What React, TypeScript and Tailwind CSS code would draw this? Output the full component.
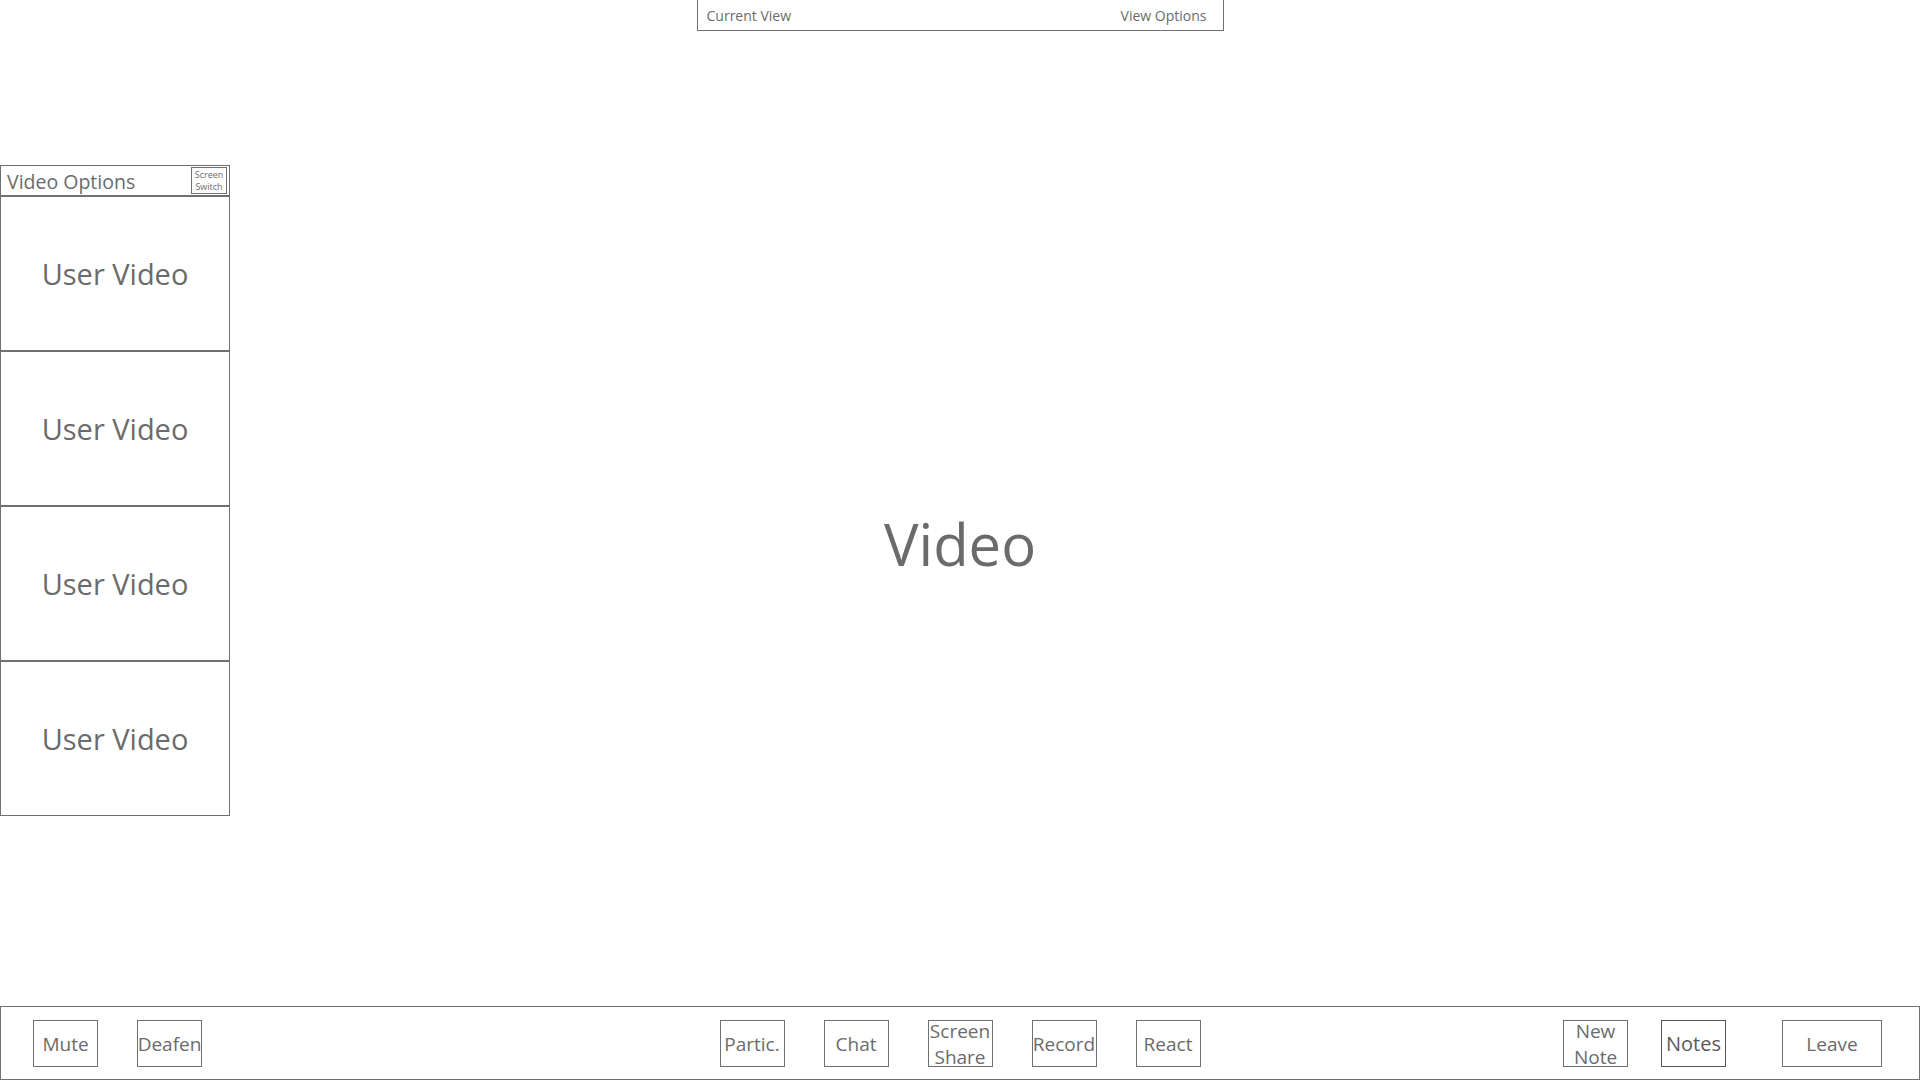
const font = { fontFamily: '"Open Sans", "Noto Sans", sans-serif' };

function ToolButton({ label, wide }: { label: string; wide?: boolean }) {
  return (
    <div
      className={`flex h-[47px] shrink-0 items-center justify-center border border-[#707070] pt-[2px] text-center text-[19px] leading-[22px] text-[#6b6b6b] ${
        wide ? "w-[100px]" : "w-[65px]"
      }`}
    >
      {label}
    </div>
  );
}

function TwoLineButton({ top, bottom }: { top: string; bottom: string }) {
  return (
    <div className="flex h-[47px] w-[65px] shrink-0 flex-col items-center justify-center border border-[#707070] pt-[2px] text-center text-[19px] leading-[26px] text-[#6b6b6b]">
      <span>{top}</span>
      <span>{bottom}</span>
    </div>
  );
}

function UserTile() {
  return (
    <div className="flex h-[155px] items-center justify-center border border-[#707070] pt-[1px] text-[29px] text-[#6b6b6b]">
      User Video
    </div>
  );
}

export default function App() {
  return (
    <div className="flex h-[1080px] w-[1920px] flex-col overflow-hidden bg-white" style={font}>
      {/* top view bar */}
      <div className="flex h-[31px] w-[527px] items-center justify-between self-center border border-t-0 border-[#707070] pl-[9px] pr-[16px] pt-[1px] text-[14px] text-[#6b6b6b]">
        <span>Current View</span>
        <span>View Options</span>
      </div>

      <div className="flex flex-1">
        {/* side panel */}
        <div className="mt-[134px] flex w-[230px] flex-col">
          <div className="flex h-[31px] items-center justify-between border border-[#707070] pl-[6px] pr-[2px]">
            <span className="pt-[2px] text-[19.5px] text-[#6b6b6b]">Video Options</span>
            <div className="flex h-[27px] w-[36px] flex-col items-center justify-center border border-[#707070] text-[9px] leading-[12px] text-[#6b6b6b]">
              <span>Screen</span>
              <span>Switch</span>
            </div>
          </div>
          <UserTile />
          <UserTile />
          <UserTile />
          <UserTile />
        </div>

        {/* main video */}
        <div className="flex flex-1 items-center justify-center pr-[230px] pt-[50px]">
          <span className="text-[58px] text-[#6b6b6b]">Video</span>
        </div>
      </div>

      {/* bottom toolbar */}
      <div className="flex h-[74px] items-center border border-[#707070]">
        <div className="flex flex-1 gap-[39px] pl-[32px]">
          <ToolButton label="Mute" />
          <ToolButton label="Deafen" />
        </div>
        <div className="ml-[5px] flex gap-[39px]">
          <ToolButton label="Partic." />
          <ToolButton label="Chat" />
          <TwoLineButton top="Screen" bottom="Share" />
          <ToolButton label="Record" />
          <ToolButton label="React" />
        </div>
        <div className="flex flex-1 justify-end pr-[37px]">
          <div className="flex">
            <TwoLineButton top="New" bottom="Note" />
            <div className="ml-[33px] flex h-[47px] w-[65px] shrink-0 items-center justify-center border border-[#555555] pt-[2px] text-[20px] text-[#5a5a5a]">
              Notes
            </div>
            <div className="ml-[56px]">
              <ToolButton label="Leave" wide />
            </div>
          </div>
        </div>
      </div>
    </div>
  );
}
